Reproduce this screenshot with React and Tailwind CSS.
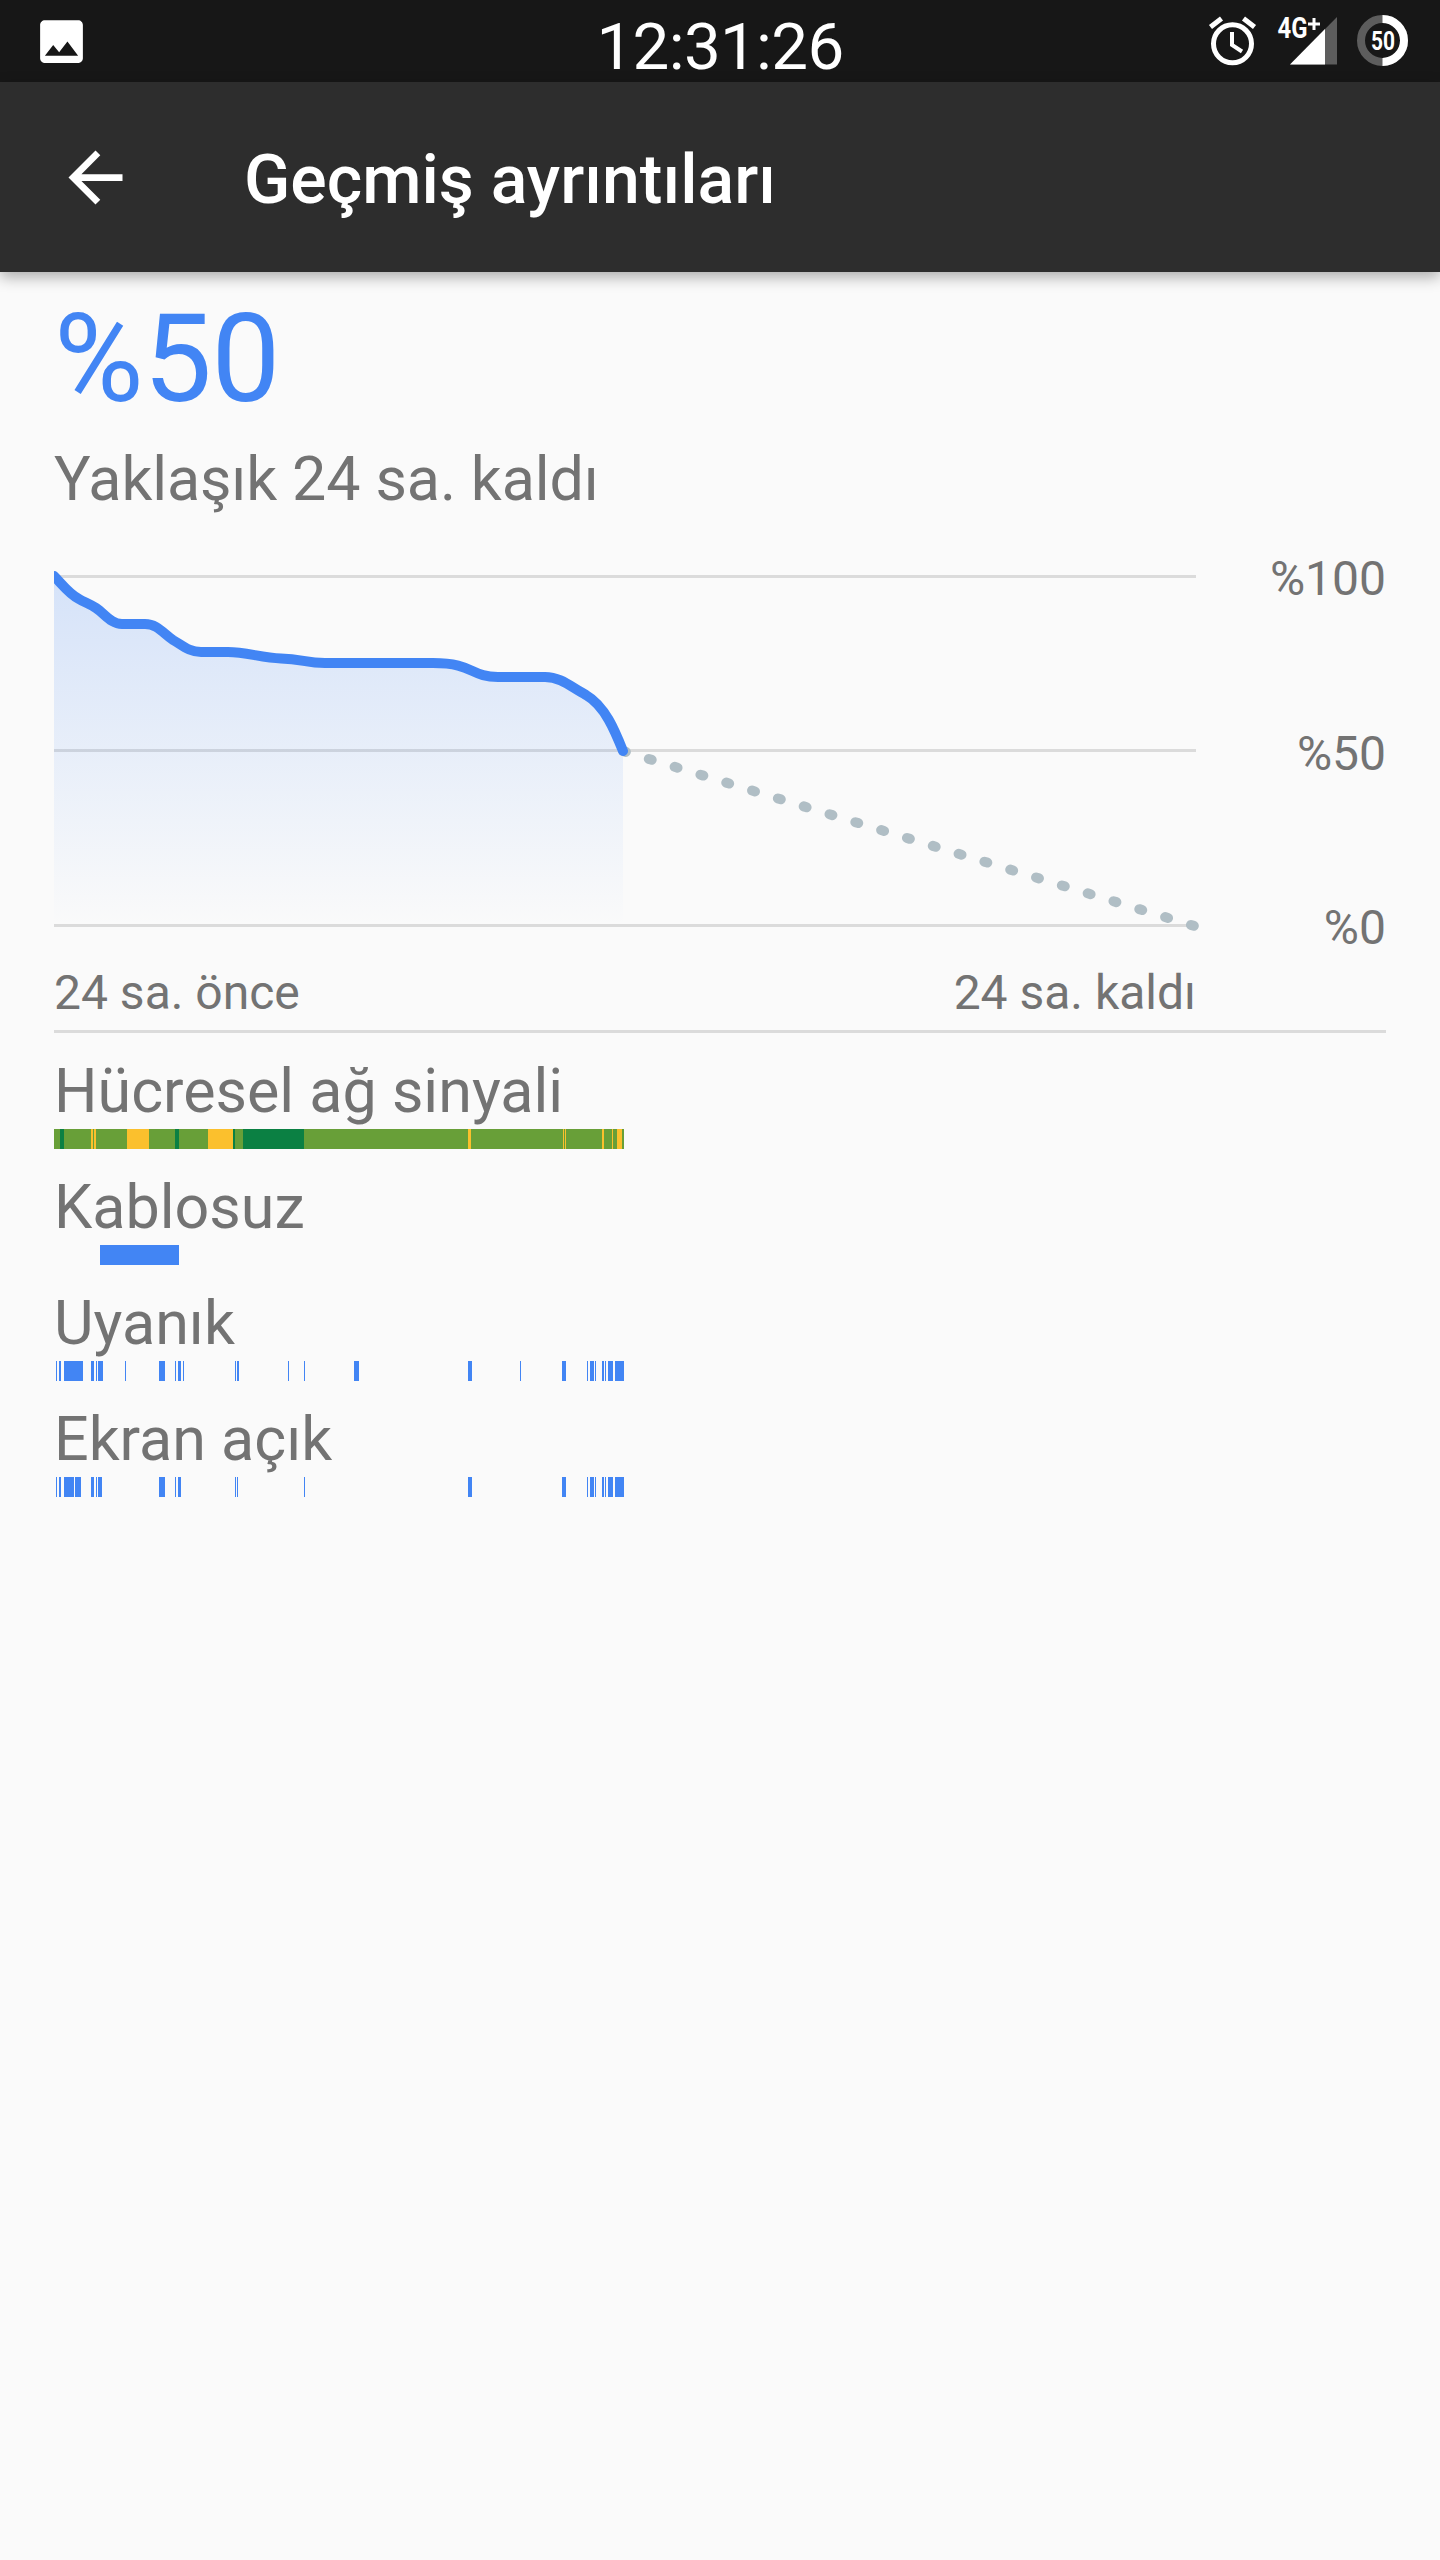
import { MdArrowBack, MdImage } from "react-icons/md";

const GREEN = "#689f38";
const DARK_GREEN = "#0b8043";
const YELLOW = "#fbc02d";
const BLUE = "#4285f4";

// [start, width, color] in px from the left edge of the graph
const cellular = [
  [0, 570, GREEN],
  [6, 4, DARK_GREEN],
  [37, 2, YELLOW],
  [40, 2, YELLOW],
  [73, 22, YELLOW],
  [121, 4, DARK_GREEN],
  [154, 25, YELLOW],
  [179, 2, DARK_GREEN],
  [189, 61, DARK_GREEN],
  [414, 3, YELLOW],
  [509, 1, YELLOW],
  [511, 1, YELLOW],
  [548, 2, YELLOW],
  [558, 1, YELLOW],
  [563, 5, YELLOW],
];

const wifi = [[46, 79]];

const awake = [
  [2, 1], [5, 2], [10, 19], [37, 3], [42, 1], [44, 5], [71, 1], [105, 6],
  [121, 1], [124, 3], [129, 1], [181, 1], [183, 2], [234, 1], [250, 1],
  [300, 5], [414, 4], [466, 1], [508, 4], [533, 1], [536, 4], [541, 1],
  [548, 2], [551, 1], [554, 5], [561, 9],
];

const screenOn = [
  [2, 1], [5, 2], [10, 10], [21, 6], [37, 3], [42, 1], [44, 4], [105, 6],
  [121, 1], [124, 3], [181, 1], [183, 1], [250, 1], [414, 4], [508, 4],
  [533, 1], [536, 4], [541, 1], [548, 2], [551, 1], [554, 5], [561, 9],
];

const rows = [
  { label: "Hücresel ağ sinyali", bars: cellular },
  { label: "Kablosuz", bars: wifi },
  { label: "Uyanık", bars: awake },
  { label: "Ekran açık", bars: screenOn },
];

const levelLine =
  "M54 576C62 584 69 594 79 599C84 602 90 604 96 608C105 614 111 624 122 624H145C157 624 163 633 173 640C182 645 189 652 201 652H228C246 652 262 658 281 658.500C302 659 306 663 325 663H433C474 663 470 677 498 677H545C561 677 571 687 586 695C605 706 615 731 623 751";

const StatusBar = () => (
  <div className="grid h-[82px] grid-cols-3 items-center bg-[#171717] text-white">
    <MdImage className="ml-[33px] size-[57px]" />
    <div className="pt-[12px] text-center text-[65.5px] leading-none tracking-[-0.7px] whitespace-nowrap">12:31:26</div>
    <div className="flex justify-end pr-8">
      <svg width="204" height="82" viewBox="0 0 204 82">
        {/* Alarm */}
        <g fill="none" stroke="#fff">
          <circle cx="28.500" cy="43.800" r="19" strokeWidth="5" />
          <path d="M28 32v13l10 6.500" strokeWidth="4" />
          <path d="M6.500 27l11-8.500M50.500 27l-11-8.500" strokeWidth="5" />
        </g>
        {/* Signal */}
        <path d="M86 64.500L133 17v47.500z" fill="#5d5d5d" />
        <path d="M86 64.500L121 29v35.500z" fill="#fff" />
        <text x="73.500" y="38" fill="#fff" fontSize="29" fontWeight="700" textLength="30" lengthAdjust="spacingAndGlyphs">
          4G
        </text>
        <path d="M104 24h12M110 18v12" stroke="#fff" strokeWidth="3" />
        {/* Battery */}
        <g fill="none" strokeWidth="8">
          <circle cx="178.500" cy="40.500" r="21.500" stroke="#5d5d5d" />
          <path d="M178.500 19a21.500 21.500 0 0 1 0 43" stroke="#fff" />
        </g>
        <text x="167" y="50" fill="#fff" fontSize="25" fontWeight="700" textLength="24" lengthAdjust="spacingAndGlyphs">
          50
        </text>
      </svg>
    </div>
  </div>
);

const Chart = () => (
  <svg className="block" width="1142" height="370" viewBox="54 565 1142 370" overflow="visible">
    <defs>
      <linearGradient id="fill" gradientUnits="userSpaceOnUse" x1="0" y1="576" x2="0" y2="926">
        <stop offset="0" stopColor={BLUE} stopOpacity="0.2" />
        <stop offset="1" stopColor={BLUE} stopOpacity="0" />
      </linearGradient>
      <clipPath id="graph">
        <rect x="54" y="560" width="1160" height="380" />
      </clipPath>
    </defs>
    <path d="M54 576.500H1196M54 750.500H1196M54 925.500H1196" stroke="#dbdbdb" strokeWidth="3" />
    <g clipPath="url(#graph)" fill="none" strokeLinecap="round" strokeLinejoin="round" strokeWidth="10">
      <path d={`${levelLine}V926H54Z`} fill="url(#fill)" />
      <path d="M623 751L1196 926.500" stroke="#b0bec5" strokeDasharray="3 24" />
      <path d={levelLine} stroke={BLUE} />
    </g>
  </svg>
);

const HistoryRow = ({ label, bars }) => (
  <div className="h-[116px]">
    <div className="h-[85px] pt-[11px] text-[61px] leading-[72px]">{label}</div>
    <svg className="block" width="570" height="20" shapeRendering="crispEdges">
      {bars.map(([x, width, color = BLUE]) => (
        <rect key={x} x={x} width={width} height="20" fill={color} />
      ))}
    </svg>
  </div>
);

export default function App() {
  return (
    <div className="h-[2560px] w-[1440px] overflow-hidden bg-[#fafafa] font-[Roboto,sans-serif] text-[#737373]">
      <StatusBar />

      {/* App bar */}
      <header className="flex h-[190px] items-center bg-[#2d2d2d] text-white shadow-[0_5px_14px_rgba(0,0,0,0.32)]">
        <MdArrowBack className="ml-[55px] size-[81px]" />
        <h1 className="ml-[108px] pt-[5px] text-[68px] leading-[80px] font-medium">Geçmiş ayrıntıları</h1>
      </header>

      <main className="px-[54px] pt-[15px]">
        <div className="text-[122.4px] leading-[144px] tracking-[-0.5px] text-[#4285f4]">%50</div>
        <div className="mt-[12px] text-[61px] leading-[72px] tracking-[-0.12px]">Yaklaşık 24 sa. kaldı</div>

        <div className="mt-[50px] flex justify-between">
          <Chart />
          <div className="-mt-[14px] mb-[9px] flex h-[405px] flex-col justify-between text-right text-[48px] leading-[56px]">
            <span>%100</span>
            <span>%50</span>
            <span>%0</span>
          </div>
        </div>
        <div className="flex w-[1142px] justify-between text-[48px] leading-[56px]">
          <span>24 sa. önce</span>
          <span>24 sa. kaldı</span>
        </div>
        <div className="mt-[9px] h-[3px] bg-[#dbdbdb]" />
        <div className="mt-[11px]">
          {rows.map((row) => (
            <HistoryRow key={row.label} {...row} />
          ))}
        </div>
      </main>
    </div>
  );
}
